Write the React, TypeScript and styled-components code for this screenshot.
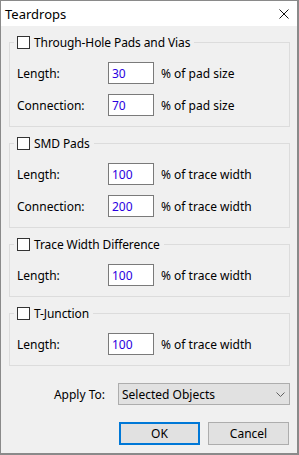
import styled, { createGlobalStyle } from "styled-components";

const Global = createGlobalStyle`
  html, body {
    margin: 0;
    padding: 0;
    background: #ffffff;
  }
  * {
    box-sizing: border-box;
  }
`;

const S = {
  Window: styled.div`
    width: 299px;
    height: 455px;
    display: flex;
    flex-direction: column;
    background-color: #f0f0f0;
    border-style: solid;
    border-color: #8a8a8a;
    border-width: 1px 2px 2px 1px;
    font-family: "Noto Sans", "Open Sans", sans-serif;
    font-size: 12px;
    color: #000;
  `,
  TitleBar: styled.div`
    display: flex;
    align-items: center;
    justify-content: space-between;
    height: 25px;
    padding: 0 8px 0 4px;
    background-color: #ffffff;
  `,
  Title: styled.span`
    font-size: 13px;
    line-height: 16px;
  `,
  Body: styled.div`
    display: flex;
    flex-direction: column;
    flex: 1;
    padding: 10px 7px 8px 8px;
  `,
  Group: styled.fieldset`
    margin: 0 0 10px 0;
    padding: 0 0 10px 4px;
    border: 1px solid #dcdcdc;
    display: flex;
    flex-direction: column;
    gap: 10px;
  `,
  Legend: styled.legend`
    display: flex;
    align-items: center;
    gap: 4px;
    height: 13px;
    padding: 0 4px 0 3px;
    margin-bottom: 13px;
    line-height: 13px;
    letter-spacing: -0.1px;
  `,
  Check: styled.span`
    display: inline-block;
    width: 13px;
    height: 13px;
    border: 1px solid #333333;
    background-color: #ffffff;
  `,
  Row: styled.div`
    display: flex;
    align-items: center;
    height: 22px;
    padding-left: 3px;
  `,
  Label: styled.span`
    width: 91px;
  `,
  Input: styled.div`
    width: 46px;
    height: 22px;
    display: flex;
    align-items: center;
    padding-left: 3px;
    border: 1px solid #7a7a7a;
    background-color: #ffffff;
    color: #2a00e0;
  `,
  Suffix: styled.span`
    margin-left: 7px;
  `,
  ApplyRow: styled.div`
    display: flex;
    justify-content: flex-end;
    align-items: center;
    gap: 13px;
    margin-top: 7px;
  `,
  Combo: styled.div`
    width: 172px;
    height: 22px;
    display: flex;
    align-items: center;
    justify-content: space-between;
    padding: 0 4px 0 3px;
    background-color: #e1e1e1;
    border: 1px solid #adadad;
  `,
  Buttons: styled.div`
    display: flex;
    justify-content: flex-end;
    gap: 8px;
    margin-top: 17px;
    padding-right: 1px;
  `,
  Button: styled.button<{ $default?: boolean }>`
    width: 81px;
    height: 23px;
    padding: 0;
    font-family: inherit;
    font-size: 12px;
    color: #000;
    background-color: #e1e1e1;
    border: ${(p) => (p.$default ? "2px solid #0078d7" : "1px solid #adadad")};
  `,
};

type Field = { label: string; value: string; unit: string };

const groups: { title: string; fields: Field[] }[] = [
  {
    title: "Through-Hole Pads and Vias",
    fields: [
      { label: "Length:", value: "30", unit: "% of pad size" },
      { label: "Connection:", value: "70", unit: "% of pad size" },
    ],
  },
  {
    title: "SMD Pads",
    fields: [
      { label: "Length:", value: "100", unit: "% of trace width" },
      { label: "Connection:", value: "200", unit: "% of trace width" },
    ],
  },
  {
    title: "Trace Width Difference",
    fields: [{ label: "Length:", value: "100", unit: "% of trace width" }],
  },
  {
    title: "T-Junction",
    fields: [{ label: "Length:", value: "100", unit: "% of trace width" }],
  },
];

const App = () => {
  return (
    <>
      <Global />
      <S.Window>
        <S.TitleBar>
          <S.Title>Teardrops</S.Title>
          <svg width="10" height="10" viewBox="0 0 10 10">
            <path d="M0.5 0.5 L9.5 9.5 M9.5 0.5 L0.5 9.5" stroke="#111" strokeWidth="1" fill="none" />
          </svg>
        </S.TitleBar>
        <S.Body>
          {groups.map((g) => (
            <S.Group key={g.title}>
              <S.Legend>
                <S.Check />
                {g.title}
              </S.Legend>
              {g.fields.map((f) => (
                <S.Row key={f.label}>
                  <S.Label>{f.label}</S.Label>
                  <S.Input>{f.value}</S.Input>
                  <S.Suffix>{f.unit}</S.Suffix>
                </S.Row>
              ))}
            </S.Group>
          ))}
          <S.ApplyRow>
            <span>Apply To:</span>
            <S.Combo>
              <span>Selected Objects</span>
              <svg width="9" height="5" viewBox="0 0 9 5">
                <path d="M0.5 0.5 L4.5 4.5 L8.5 0.5" stroke="#606060" strokeWidth="1" fill="none" />
              </svg>
            </S.Combo>
          </S.ApplyRow>
          <S.Buttons>
            <S.Button $default>OK</S.Button>
            <S.Button>Cancel</S.Button>
          </S.Buttons>
        </S.Body>
      </S.Window>
    </>
  );
};

export default App;
